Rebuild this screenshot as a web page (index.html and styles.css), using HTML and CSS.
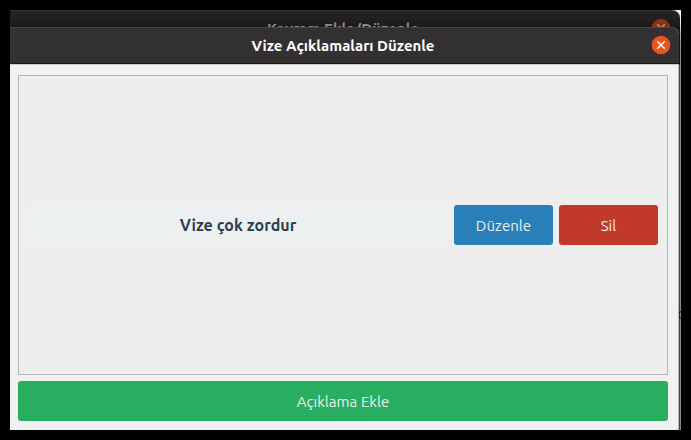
FILE: index.html
```html
<!DOCTYPE html>
<html lang="tr">
<head>
<meta charset="utf-8">
<title>Vize Açıklamaları Düzenle</title>
<link rel="stylesheet" href="styles.css">
</head>
<body>
<div class="desktop">
  <div class="parent-bar">
    <span class="parent-title">Kavram Ekle/Düzenle</span>
    <svg class="close parent-close" viewBox="0 0 20 20"><circle cx="10" cy="10" r="9.3"/><path d="M6.2 6.2l7.6 7.6m0-7.6l-7.6 7.6"/></svg>
  </div>
  <span class="behind">d</span>
  <section class="dialog">
    <header class="titlebar">
      <h1 class="title">Vize Açıklamaları Düzenle</h1>
      <svg class="close" viewBox="0 0 20 20"><circle cx="10" cy="10" r="9.3"/><path d="M6.2 6.2l7.6 7.6m0-7.6l-7.6 7.6"/></svg>
    </header>
    <main class="content">
      <div class="list">
        <div class="row">
          <div class="label"><span>Vize çok zordur</span></div>
          <button class="btn edit"><span>Düzenle</span></button>
          <button class="btn delete"><span>Sil</span></button>
        </div>
      </div>
      <button class="btn add"><span>Açıklama Ekle</span></button>
    </main>
  </section>
</div>
</body>
</html>
```
FILE: styles.css
```css
* { box-sizing: border-box; }
body {
  margin: 0;
  padding: 10px;
  width: 691px;
  height: 440px;
  background: #000;
  overflow: hidden;
  font-family: Ubuntu, "Noto Sans", sans-serif;
}
.desktop {
  position: relative;
  width: 671px;
  height: 420px;
  overflow: hidden;
  background: linear-gradient(#f4f4f4 0 10px, #aaa 24px, transparent 40px), linear-gradient(90deg, #444 0 670px, #8a8a8a 670px);
}
.parent-bar {
  position: relative;
  width: 670px;
  height: 55px;
  margin-bottom: -38px;
  text-align: center;
  background: linear-gradient(#262324, #1e1b1c 15px, #151314 16px);
  border-top: 1px solid #373435;
  border-radius: 0 8px 0 0;
}
.parent-title {
  display: inline-block;
  margin: 6px 4px 0 0;
  font-size: 15px;
  line-height: 24px;
  font-weight: 700;
  letter-spacing: 0.07px;
  color: #8d8b8b;
  white-space: nowrap;
}
.close { width: 20px; height: 20px; }
.close circle { fill: #e95420; }
.close path { stroke: #fff; stroke-width: 1.5; fill: none; }
.parent-close { position: absolute; top: 7px; right: 9px; }
.parent-close circle { fill: #8c3213; }
.parent-close path { stroke: #999; }
.behind { position: absolute; right: -5px; top: 295px; font-size: 15px; line-height: 18px; color: #111; }
.dialog {
  position: relative;
  display: flex;
  flex-direction: column;
  width: 669px;
  height: 403px;
  background: #f1f1f1;
  border-radius: 0 8px 0 0;
  overflow: hidden;
}
.titlebar {
  flex: none;
  display: flex;
  align-items: center;
  height: 37px;
  padding: 0 8px 1px 25px;
  background: #333031;
  border-top: 1px solid #474445;
  border-bottom: 1px solid #1a1819;
}
.title {
  flex: 1;
  margin: 1px 0 0;
  text-align: center;
  font-size: 15px;
  font-weight: 700;
  line-height: 20px;
  color: #fff;
}
.content {
  flex: 1;
  display: flex;
  flex-direction: column;
  gap: 6px;
  padding: 10px 10px 9px 8px;
  border-top: 1px solid #c8c8c8;
  border-right: 1px solid #b8b8b8;
}
.list {
  flex: 1;
  display: flex;
  align-items: center;
  padding: 0 9px;
  background: #eee;
  border: 1px solid #b6b6b6;
}
.row { display: flex; flex: 1; gap: 6px; height: 40px; }
.label {
  flex: 1;
  display: flex;
  align-items: center;
  justify-content: center;
  background: #ecf0f1;
  border-radius: 3px;
  color: #2c3e50;
  font-size: 16px;
  font-weight: 700;
  letter-spacing: 0.05px;
}
.btn {
  display: flex;
  align-items: center;
  justify-content: center;
  height: 40px;
  padding: 0;
  border: 0;
  border-radius: 3px;
  color: #ecf0f1;
  font-family: inherit;
  font-size: 15px;
  letter-spacing: 0.06px;
}
.edit, .delete { width: 99px; }
.edit { background: #2980b9; }
.delete { background: #c0392b; }
.add { flex: none; background: #27ae60; }
```
